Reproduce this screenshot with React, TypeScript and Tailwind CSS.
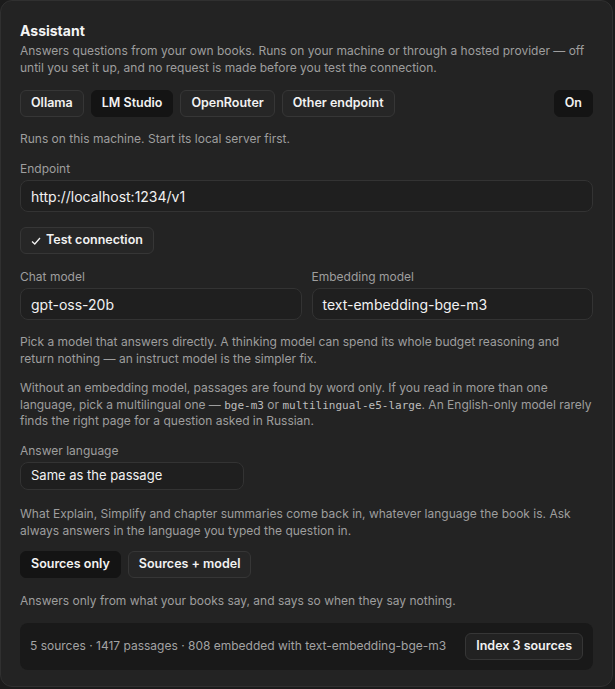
const providers = [
  { label: "Ollama", active: false },
  { label: "LM Studio", active: true },
  { label: "OpenRouter", active: false },
  { label: "Other endpoint", active: false },
];

const Chip = ({ label, active }: { label: string; active?: boolean }) => (
  <button
    className={
      active
        ? "h-[27px] px-[10px] rounded-md bg-[#141414] border border-[#141414] text-[12.5px] font-semibold text-[#f2f2f2]"
        : "h-[27px] px-[10px] rounded-md bg-[#262626] border border-[#363636] text-[12.5px] font-semibold text-[#f2f2f2]"
    }
  >
    {label}
  </button>
);

const Field = ({ value }: { value: string }) => (
  <div className="h-[32px] flex items-center px-[10px] rounded-lg bg-[#1f1f1f] border border-[#333333] text-[14px] text-[#f2f2f2]">
    {value}
  </div>
);

const Label = ({ children }: { children: React.ReactNode }) => (
  <div className="text-[12px] leading-[17px] text-[#9e9e9e]">{children}</div>
);

export default function App() {
  return (
    <div className="min-h-screen bg-[#1b1b1b] font-['Inter',sans-serif]">
      <div className="w-[613px] rounded-xl bg-[#232323] border border-[#303030] px-[19px] pt-[20px] pb-[16px]">
        <h2 className="text-[14px] leading-[20px] font-bold text-[#f4f4f4]">Assistant</h2>
        <p className="mt-[1px] text-[12px] leading-[17px] text-[#9e9e9e]">
          Answers questions from your own books. Runs on your machine or through a hosted provider — off
          until you set it up, and no request is made before you test the connection.
        </p>

        <div className="mt-[14px] flex items-center justify-between">
          <div className="flex gap-[7px]">
            {providers.map((p) => (
              <Chip key={p.label} label={p.label} active={p.active} />
            ))}
          </div>
          <Chip label="On" active />
        </div>

        <p className="mt-[13px] text-[12px] leading-[17px] text-[#9e9e9e]">
          Runs on this machine. Start its local server first.
        </p>

        <div className="mt-[13px]">
          <Label>Endpoint</Label>
          <div className="mt-[3px]">
            <Field value="http://localhost:1234/v1" />
          </div>
        </div>

        <button className="mt-[15px] h-[27px] px-[10px] flex items-center gap-[5px] rounded-md bg-[#262626] border border-[#363636] text-[12.5px] font-semibold text-[#f2f2f2]">
          <svg width="10" height="10" viewBox="0 0 10 10" fill="none" stroke="currentColor" strokeWidth="1.3">
            <path d="M1 5.5 L3.8 8 L9 2" />
          </svg>
          Test connection
        </button>

        <div className="mt-[14px] grid grid-cols-2 gap-[10px]">
          <div>
            <Label>Chat model</Label>
            <div className="mt-[3px]">
              <Field value="gpt-oss-20b" />
            </div>
          </div>
          <div>
            <Label>Embedding model</Label>
            <div className="mt-[3px]">
              <Field value="text-embedding-bge-m3" />
            </div>
          </div>
        </div>

        <p className="mt-[13px] text-[12px] leading-[17px] text-[#9e9e9e]">
          Pick a model that answers directly. A thinking model can spend its whole budget reasoning and
          return nothing — an instruct model is the simpler fix.
        </p>

        <p className="mt-[13px] text-[12px] leading-[16.5px] text-[#9e9e9e]">
          Without an embedding model, passages are found by word only. If you read in more than one
          language, pick a multilingual one —{" "}
          <code className="font-['DejaVu_Sans_Mono',monospace] text-[11px] leading-none text-[#bdbdbd]">bge-m3</code> or{" "}
          <code className="font-['DejaVu_Sans_Mono',monospace] text-[11px] leading-none text-[#bdbdbd]">multilingual-e5-large</code>.
          An English-only model rarely finds the right page for a question asked in Russian.
        </p>

        <div className="mt-[12px]">
          <Label>Answer language</Label>
          <div className="mt-[3px] w-[224px] h-[28px] flex items-center px-[10px] rounded-lg bg-[#1f1f1f] border border-[#333333] text-[13px] text-[#f2f2f2]">
            Same as the passage
          </div>
        </div>

        <p className="mt-[15px] text-[12px] leading-[17px] text-[#9e9e9e]">
          What Explain, Simplify and chapter summaries come back in, whatever language the book is. Ask
          always answers in the language you typed the question in.
        </p>

        <div className="mt-[12px] flex gap-[7px]">
          <Chip label="Sources only" active />
          <Chip label="Sources + model" />
        </div>

        <p className="mt-[14px] text-[12px] leading-[17px] text-[#9e9e9e]">
          Answers only from what your books say, and says so when they say nothing.
        </p>

        <div className="mt-[14px] h-[47px] rounded-lg bg-[#191919] pl-[10px] pr-[10px] flex items-center justify-between">
          <span className="text-[12px] text-[#a3a3a3]">
            5 sources · 1417 passages · 808 embedded with text-embedding-bge-m3
          </span>
          <button className="h-[27px] px-[10px] rounded-md bg-[#222222] border border-[#363636] text-[12.5px] font-semibold text-[#f2f2f2]">
            Index 3 sources
          </button>
        </div>
      </div>
    </div>
  );
}
